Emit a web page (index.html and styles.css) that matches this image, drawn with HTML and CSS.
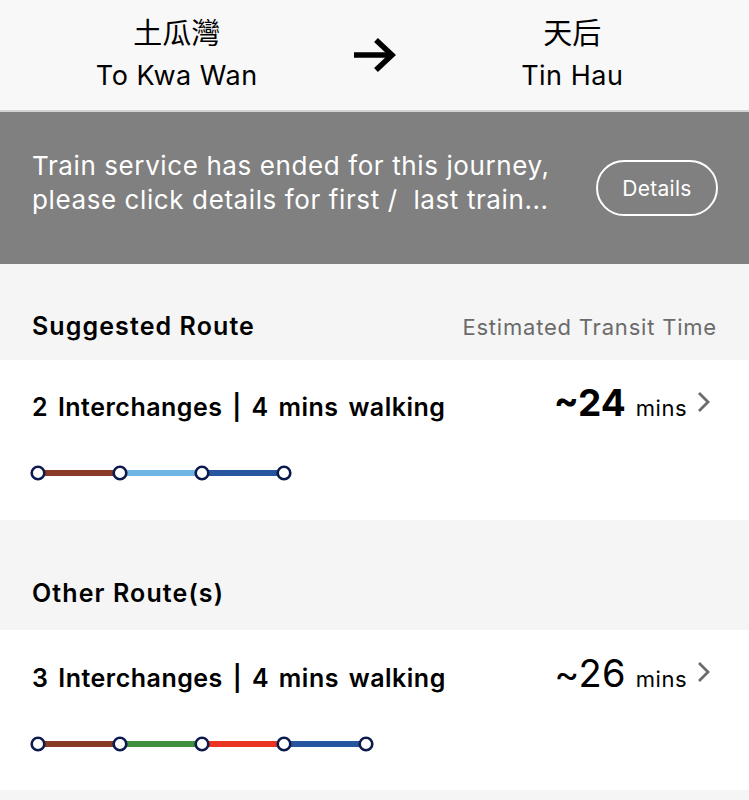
FILE: index.html
```html
<!DOCTYPE html>
<html>
<head>
<meta charset="utf-8">
<link rel="stylesheet" href="styles.css">
</head>
<body>
<header class="journey">
  <div class="station">
    <div class="zh">土瓜灣</div>
    <div class="en">To Kwa Wan</div>
  </div>
  <svg class="arrow" width="42" height="34" viewBox="0 0 42 34">
    <path d="M0 17 H36" stroke="#000" stroke-width="5.5" fill="none"/>
    <path d="M22 2 L38 17 L22 32" stroke="#000" stroke-width="5.5" fill="none" stroke-linejoin="miter"/>
  </svg>
  <div class="station">
    <div class="zh">天后</div>
    <div class="en">Tin Hau</div>
  </div>
</header>

<section class="notice">
  <p class="notice-text">Train service has ended for this journey,<br>please click details for first /&nbsp; last train...</p>
  <button class="details">Details</button>
</section>

<div class="section-head first">
  <span class="section-title">Suggested Route</span>
  <span class="section-sub">Estimated Transit Time</span>
</div>

<div class="card">
  <div class="card-row">
    <span class="route-title">2 Interchanges | 4 mins walking</span>
    <span class="time"><span class="num bold">~24</span><span class="unit">mins</span>
      <svg class="chev" width="14" height="22" viewBox="0 0 14 22"><path d="M2 2 L11 11 L2 20" stroke="#6b6b6b" stroke-width="2.8" fill="none"/></svg>
    </span>
  </div>
  <svg class="line" width="290" height="20" viewBox="0 0 290 20">
    <line x1="14" y1="10" x2="96" y2="10" stroke="#8a3b27" stroke-width="6"/>
    <line x1="96" y1="10" x2="178" y2="10" stroke="#6fb5e3" stroke-width="6"/>
    <line x1="178" y1="10" x2="260" y2="10" stroke="#2656a0" stroke-width="6"/>
    <g fill="#fff" stroke="#0c1a4e" stroke-width="2.6">
      <circle cx="14" cy="10" r="6.3"/>
      <circle cx="96" cy="10" r="6.3"/>
      <circle cx="178" cy="10" r="6.3"/>
      <circle cx="260" cy="10" r="6.3"/>
    </g>
  </svg>
</div>

<div class="section-head second">
  <span class="section-title">Other Route(s)</span>
</div>

<div class="card">
  <div class="card-row">
    <span class="route-title">3 Interchanges | 4 mins walking</span>
    <span class="time"><span class="num">~26</span><span class="unit">mins</span>
      <svg class="chev" width="14" height="22" viewBox="0 0 14 22"><path d="M2 2 L11 11 L2 20" stroke="#6b6b6b" stroke-width="2.8" fill="none"/></svg>
    </span>
  </div>
  <svg class="line" width="372" height="20" viewBox="0 0 372 20">
    <line x1="14" y1="10" x2="96" y2="10" stroke="#8a3b27" stroke-width="6"/>
    <line x1="96" y1="10" x2="178" y2="10" stroke="#3f8f3c" stroke-width="6"/>
    <line x1="178" y1="10" x2="260" y2="10" stroke="#ea3424" stroke-width="6"/>
    <line x1="260" y1="10" x2="342" y2="10" stroke="#2656a0" stroke-width="6"/>
    <g fill="#fff" stroke="#0c1a4e" stroke-width="2.6">
      <circle cx="14" cy="10" r="6.3"/>
      <circle cx="96" cy="10" r="6.3"/>
      <circle cx="178" cy="10" r="6.3"/>
      <circle cx="260" cy="10" r="6.3"/>
      <circle cx="342" cy="10" r="6.3"/>
    </g>
  </svg>
</div>
</body>
</html>
```

FILE: styles.css
```css
html, body {
  margin: 0;
  padding: 0;
}
body {
  background: #f5f5f5;
  font-family: "Inter", "Noto Sans CJK TC", sans-serif;
  color: #000;
  width: 749px;
  height: 800px;
  overflow: hidden;
}
.journey {
  display: grid;
  grid-template-columns: 1fr 42px 1fr;
  align-items: center;
  background: #f8f8f8;
  height: 112px;
  box-sizing: border-box;
  padding: 12px 0 0;
  border-bottom: 2px solid #d4d4d4;
  align-content: start;
}
.station {
  text-align: center;
}
.zh {
  font-family: "Noto Sans CJK TC", sans-serif;
  font-size: 29px;
  line-height: 38px;
}
.en {
  font-size: 27px;
  letter-spacing: 0.5px;
  line-height: 36px;
  margin-top: 8px;
}
.arrow {
  display: block;
  margin-top: 4px;
}
.notice {
  background: #808080;
  height: 152px;
  box-sizing: border-box;
  padding: 0 31px 0 32px;
  display: flex;
  align-items: center;
  justify-content: space-between;
}
.notice-text {
  margin: 0;
  color: #fff;
  font-size: 26px;
  letter-spacing: 0.6px;
  line-height: 34px;
  margin-top: -11px;
  white-space: nowrap;
}
.details {
  flex: none;
  width: 122px;
  height: 56px;
  border: 2px solid #fff;
  border-radius: 28px;
  background: transparent;
  color: #fff;
  font-family: "Inter", sans-serif;
  font-size: 21px;
  letter-spacing: 0.3px;
  padding: 0;
}
.section-head {
  display: flex;
  justify-content: space-between;
  align-items: baseline;
  padding: 0 32px;
  line-height: 32px;
  box-sizing: border-box;
}
.section-head.first {
  height: 96px;
  padding-top: 46px;
}
.section-head.second {
  height: 110px;
  padding-top: 57px;
}
.section-title {
  font-size: 25px;
  font-weight: 600;
  letter-spacing: 1.1px;
}
.section-sub {
  font-size: 22px;
  letter-spacing: 0.8px;
  color: #6b6b6b;
}
.card {
  background: #fff;
  height: 160px;
  box-sizing: border-box;
  padding: 27px 38px 0 32px;
}
.card-row {
  display: flex;
  justify-content: space-between;
  align-items: baseline;
  line-height: 32px;
}
.route-title {
  font-size: 25px;
  font-weight: 600;
  letter-spacing: 0.5px;
  word-spacing: 3px;
}
.time {
  display: flex;
  align-items: baseline;
}
.num {
  font-size: 38px;
  line-height: 32px;
  letter-spacing: 0.3px;
}
.num.bold {
  font-size: 37px;
  letter-spacing: 0;
  font-weight: 700;
}
.unit {
  font-size: 22px;
  letter-spacing: 0.5px;
  margin-left: 10px;
}
.chev {
  margin-left: 10px;
  align-self: center;
  position: relative;
  top: -4px;
}
.line {
  display: block;
  margin: 39px 0 0 -8px;
}
```
